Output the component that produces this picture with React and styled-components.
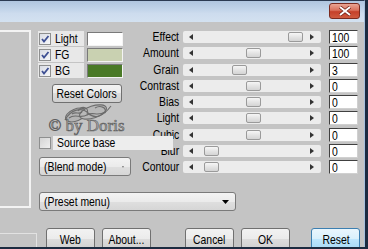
import React from 'react';
import styled, { createGlobalStyle } from 'styled-components';

const GlobalStyle = createGlobalStyle`
  html, body { margin: 0; padding: 0; background: #c4c4c4; }
  body { font-family: "Liberation Sans", Arial, sans-serif; font-size: 13px; color: #000; }
  * { box-sizing: border-box; }
`;

const PARAMS = [
  { label: 'Effect', value: '100', thumb: 105 },
  { label: 'Amount', value: '100', thumb: 63 },
  { label: 'Grain', value: '3', thumb: 49 },
  { label: 'Contrast', value: '0', thumb: 63 },
  { label: 'Bias', value: '0', thumb: 63 },
  { label: 'Light', value: '0', thumb: 63 },
  { label: 'Cubic', value: '0', thumb: 63 },
  { label: 'Blur', value: '0', thumb: 21 },
  { label: 'Contour', value: '0', thumb: 21 },
];

const COLORS = [
  { label: 'Light', color: '#ffffff' },
  { label: 'FG', color: '#c9d1b1' },
  { label: 'BG', color: '#4a7a27' },
];

const Check = ({ checked }) => (
  <CheckBox>
    {checked && (
      <svg width="10" height="10" viewBox="0 0 10 10">
        <path d="M2 5 L4 7.5 L8.5 2" fill="none" stroke="#3d4f93" strokeWidth="1.8" />
      </svg>
    )}
  </CheckBox>
);

const Arrow = () => (
  <svg width="7" height="4" viewBox="0 0 7 4">
    <path d="M0 0 H7 L3.5 4 Z" fill="#000" />
  </svg>
);

const Slider = ({ thumb }) => (
  <Track>
    <svg width="4" height="6" viewBox="0 0 4 6"><path d="M4 0 V6 L0 3 Z" fill="#333" /></svg>
    <Thumb style={{ left: thumb }} />
    <svg width="4" height="6" viewBox="0 0 4 6"><path d="M0 0 V6 L4 3 Z" fill="#333" /></svg>
  </Track>
);

const App = () => (
  <>
    <GlobalStyle />
    <Window>
      <TitleBar>
        <CloseButton>
          <svg width="14" height="10" viewBox="0 0 14 10">
            <path d="M2 1 L12 9 M12 1 L2 9" stroke="#6a1a10" strokeWidth="3.4" />
            <path d="M2 1 L12 9 M12 1 L2 9" stroke="#fff" strokeWidth="2" />
          </svg>
        </CloseButton>
      </TitleBar>

      <Content>
        <Upper>
          <LeftFrame />
          <Main>
            <ParamArea>
              <LeftCol>
                <ColorRows>
                  {COLORS.map((c) => (
                    <ColorRow key={c.label}>
                      <CheckCell>
                        <Check checked />
                        <Narrow>{c.label}</Narrow>
                      </CheckCell>
                      <Swatch $color={c.color} />
                    </ColorRow>
                  ))}
                </ColorRows>
                <ResetColors><Narrow $origin="center">Reset Colors</Narrow></ResetColors>
                <Watermark>
                  <svg width="54" height="20" viewBox="0 0 54 20">
                    <g fill="none" stroke="#6c6c6c" strokeWidth="1.1">
                      <ellipse cx="16" cy="12" rx="11" ry="6" transform="rotate(-22 16 12)" fill="#b4b4b4" />
                      <ellipse cx="33" cy="9" rx="14" ry="6" transform="rotate(-18 33 9)" fill="#b8b8b8" />
                      <path d="M5 17 C11 6 22 4 28 10 S42 15 51 3" />
                      <path d="M9 15 C15 10 20 16 27 12 C33 8 37 14 45 9" />
                      <path d="M18 8 C22 2 30 4 27 12" />
                      <path d="M35 5 C40 2 47 4 45 10" />
                      <path d="M12 11 C16 8 19 12 22 9" />
                    </g>
                  </svg>
                  <WatermarkText>© by Doris</WatermarkText>
                </Watermark>
                <SourceRow>
                  <Check />
                  <SourceLabel><Narrow>Source base</Narrow></SourceLabel>
                </SourceRow>
                <Select $width={92} $top={7}>
                  <Narrow>(Blend mode)</Narrow>
                  <Arrow />
                </Select>
              </LeftCol>

              <ParamGrid>
                {PARAMS.map((p) => (
                  <React.Fragment key={p.label}>
                    <ParamLabel><Narrow $origin="right">{p.label}</Narrow></ParamLabel>
                    <Slider thumb={p.thumb} />
                    <ValueBox><Narrow>{p.value}</Narrow></ValueBox>
                  </React.Fragment>
                ))}
              </ParamGrid>
            </ParamArea>

            <Select $width={197} $top={16}>
              <Narrow>(Preset menu)</Narrow>
              <Arrow />
            </Select>
          </Main>
        </Upper>

        <Bottom>
          <BottomFrame />
          <Button $gap={9}><Narrow $origin="center">Web</Narrow></Button>
          <Button $gap={7}><Narrow $origin="center">About...</Narrow></Button>
          <Button $gap={34}><Narrow $origin="center">Cancel</Narrow></Button>
          <Button $gap={7}><Narrow $origin="center">OK</Narrow></Button>
          <Button $gap={21} $primary><Narrow $origin="center">Reset</Narrow></Button>
        </Bottom>
      </Content>
    </Window>
  </>
);

export default App;

// --- Styled Components ---

const Narrow = styled.span`
  display: inline-block;
  white-space: nowrap;
  transform: scaleX(0.8);
  transform-origin: ${(p) => p.$origin || 'left'} center;
`;

const Window = styled.div`
  width: 368px;
  height: 249px;
  overflow: hidden;
  display: flex;
  flex-direction: column;
  background: #c4c4c4;
  border-right: 3px solid #1c2b40;
  border-bottom: 2px solid #1c2b40;
`;

const TitleBar = styled.div`
  height: 22px;
  flex-shrink: 0;
  display: flex;
  justify-content: flex-end;
  align-items: flex-start;
  padding: 2px 4px 0 0;
  border-top: 1px solid #2b3a52;
  border-right: 1px solid #a7c0dc;
  background: linear-gradient(#afc5df, #bfd2e8 35%, #cddcee 60%, #d3e1f0);
`;

const CloseButton = styled.div`
  width: 31px;
  height: 16px;
  display: flex;
  align-items: center;
  justify-content: center;
  border: 1px solid #7b2a1f;
  border-radius: 3px;
  background: linear-gradient(#eaa594, #d9705c 45%, #c5402a 55%, #cf5a3f);
`;

const Content = styled.div`
  flex: 1;
  display: flex;
  flex-direction: column;
  border-right: 1px solid #a7c0dc;
`;

const Upper = styled.div`
  display: flex;
  align-items: flex-start;
  height: 189px;
`;

const LeftFrame = styled.div`
  width: 31px;
  height: 178px;
  margin-top: 8px;
  border: 2px solid #f3f3f3;
  border-left: none;
`;

const Main = styled.div`
  display: flex;
  flex-direction: column;
  margin-left: 7px;
  padding-top: 7px;
`;

const ParamArea = styled.div`
  display: flex;
  align-items: flex-start;
`;

const LeftCol = styled.div`
  width: 87px;
  display: flex;
  flex-direction: column;
`;

const ColorRows = styled.div`
  margin-top: 2px;
  display: flex;
  flex-direction: column;
  gap: 1px;
`;

const ColorRow = styled.div`
  display: flex;
  align-items: center;
  height: 15px;
`;

const CheckCell = styled.div`
  width: 46px;
  height: 15px;
  display: flex;
  align-items: center;
  gap: 4px;
  padding-left: 1px;
  background: #e8e8e8;
`;

const CheckBox = styled.div`
  width: 12px;
  height: 12px;
  flex-shrink: 0;
  display: flex;
  align-items: center;
  justify-content: center;
  border: 1px solid #8e8f8f;
  background: linear-gradient(135deg, #d9dce4, #f6f7f9);
`;

const Swatch = styled.div`
  width: 36px;
  height: 14px;
  margin-left: 3px;
  background: ${(p) => p.$color};
  border: 1px solid;
  border-color: #7a7a7a #f4f4f4 #f4f4f4 #7a7a7a;
`;

const ResetColors = styled.div`
  width: 70px;
  height: 19px;
  margin: 6px 0 0 14px;
  display: flex;
  align-items: center;
  justify-content: center;
  border: 1px solid #707070;
  border-radius: 3px;
  background: linear-gradient(#f2f2f2, #ebebeb 50%, #dddddd 50%, #cfcfcf);
`;

const Watermark = styled.div`
  height: 33px;
  display: flex;
  flex-direction: column;
  align-items: center;
  padding: 0 0 0 10px;
  svg { display: block; }
`;

const WatermarkText = styled.div`
  margin-top: -5px;
  font-family: "Liberation Serif", serif;
  font-size: 17px;
  line-height: 15px;
  white-space: nowrap;
  color: #a9a9a9;
  -webkit-text-stroke: 0.6px #5e5e5e;
`;

const SourceRow = styled.div`
  position: relative;
  z-index: 1;
  width: 135px;
  height: 14px;
  display: flex;
  align-items: center;
  gap: 2px;
  padding-left: 1px;

  ${CheckBox} { background: linear-gradient(135deg, #d4d4d4, #efefef); }
`;

const SourceLabel = styled.div`
  flex: 1;
  height: 14px;
  line-height: 14px;
  padding-left: 4px;
  background: #ededed;
`;

const Select = styled.div`
  width: ${(p) => p.$width}px;
  height: 19px;
  margin: ${(p) => p.$top}px 0 0 1px;
  display: flex;
  align-items: center;
  justify-content: space-between;
  padding: 0 6px 0 4px;
  border: 1px solid #7a7a7a;
  border-radius: 3px;
  background: linear-gradient(#f3f3f3, #ebebeb 50%, #dfdfdf 50%, #d6d6d6);
`;

const ParamGrid = styled.div`
  display: grid;
  grid-template-columns: 54px 138px 33px;
  grid-auto-rows: 16.25px;
  column-gap: 4px;
  align-items: center;
`;

const ParamLabel = styled.div`
  text-align: right;
  line-height: 14px;
  white-space: nowrap;
`;

const Track = styled.div`
  position: relative;
  height: 12px;
  display: flex;
  align-items: center;
  justify-content: space-between;
  padding: 0 7px 0 6px;
  background: #ececec;
  border-radius: 2px;
`;

const Thumb = styled.div`
  position: absolute;
  top: 1px;
  width: 15px;
  height: 10px;
  border: 1px solid #9a9a9a;
  border-radius: 2px;
  background: linear-gradient(#f6f6f6, #e4e4e4 50%, #d4d4d4);
`;

const ValueBox = styled.div`
  justify-self: end;
  width: 29px;
  height: 14px;
  line-height: 13px;
  padding-left: 2px;
  background: #fff;
  border: 1px solid;
  border-color: #404040 #d0d0d0 #d0d0d0 #404040;
`;

const Bottom = styled.div`
  display: flex;
  align-items: flex-start;
  margin-top: 17px;
`;

const BottomFrame = styled.div`
  width: 37px;
  height: 30px;
  margin-top: 5px;
  border-top: 1px solid #e2e2e2;
  border-right: 1px solid #e2e2e2;
`;

const Button = styled.div`
  width: 49px;
  height: 22px;
  margin-left: ${(p) => p.$gap}px;
  display: flex;
  align-items: center;
  justify-content: center;
  border: 1px solid ${(p) => (p.$primary ? '#3c7fb1' : '#707070')};
  border-radius: 3px;
  background: ${(p) =>
    p.$primary
      ? 'linear-gradient(#eaf6fd, #d9f0fc 50%, #bee6fd 50%, #a7d9f5)'
      : 'linear-gradient(#f2f2f2, #ebebeb 50%, #dddddd 50%, #cfcfcf)'};
`;
